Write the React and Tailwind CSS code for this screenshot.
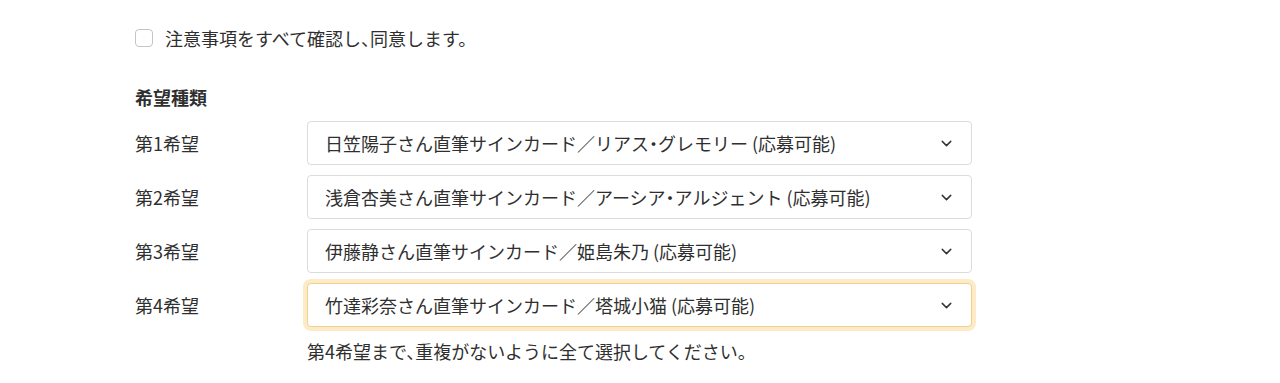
import { ChevronDown } from "lucide-react"

const choices = [
  { label: "第1希望", value: "日笠陽子さん直筆サインカード／リアス・グレモリー (応募可能)" },
  { label: "第2希望", value: "浅倉杏美さん直筆サインカード／アーシア・アルジェント (応募可能)" },
  { label: "第3希望", value: "伊藤静さん直筆サインカード／姫島朱乃 (応募可能)" },
  { label: "第4希望", value: "竹達彩奈さん直筆サインカード／塔城小猫 (応募可能)", focused: true },
]

const App = () => {
  return (
    <div
      className="w-[1280px] h-[383px] bg-white text-[#2f2f2f] text-[18px] overflow-hidden [font-feature-settings:'halt']"
      style={{ fontFamily: '"Noto Sans CJK JP", "Noto Sans", sans-serif' }}
    >
      <div className="pl-[135px] pt-[27px]">
        <label className="flex items-center gap-[12px] h-[22px]">
          <span className="w-[18px] h-[18px] border border-[#c4c4c4] rounded-[4px] bg-white" />
          <span className="leading-none">注意事項をすべて確認し、同意します。</span>
        </label>

        <h3 className="mt-[37px] font-bold leading-[22px]">希望種類</h3>

        <div className="mt-[13px] flex flex-col gap-[10px]">
          {choices.map((c) => (
            <div key={c.label} className="flex items-center">
              <div className="w-[172px]">{c.label}</div>
              <div
                className={`w-[665px] h-[44px] flex items-center justify-between pl-[17px] pr-[16px] rounded-[4px] bg-white ${
                  c.focused
                    ? "border border-[#f1d08c] ring-[4px] ring-[#fcebc6]"
                    : "border border-[#dcdcdc]"
                }`}
              >
                <span className="leading-none">{c.value}</span>
                <ChevronDown className="w-[17px] h-[17px] text-[#333]" strokeWidth={2} />
              </div>
            </div>
          ))}
        </div>

        <p className="mt-[13px] pl-[172px] leading-[22px]">
          第4希望まで、重複がないように全て選択してください。
        </p>
      </div>
    </div>
  )
}

export default App
